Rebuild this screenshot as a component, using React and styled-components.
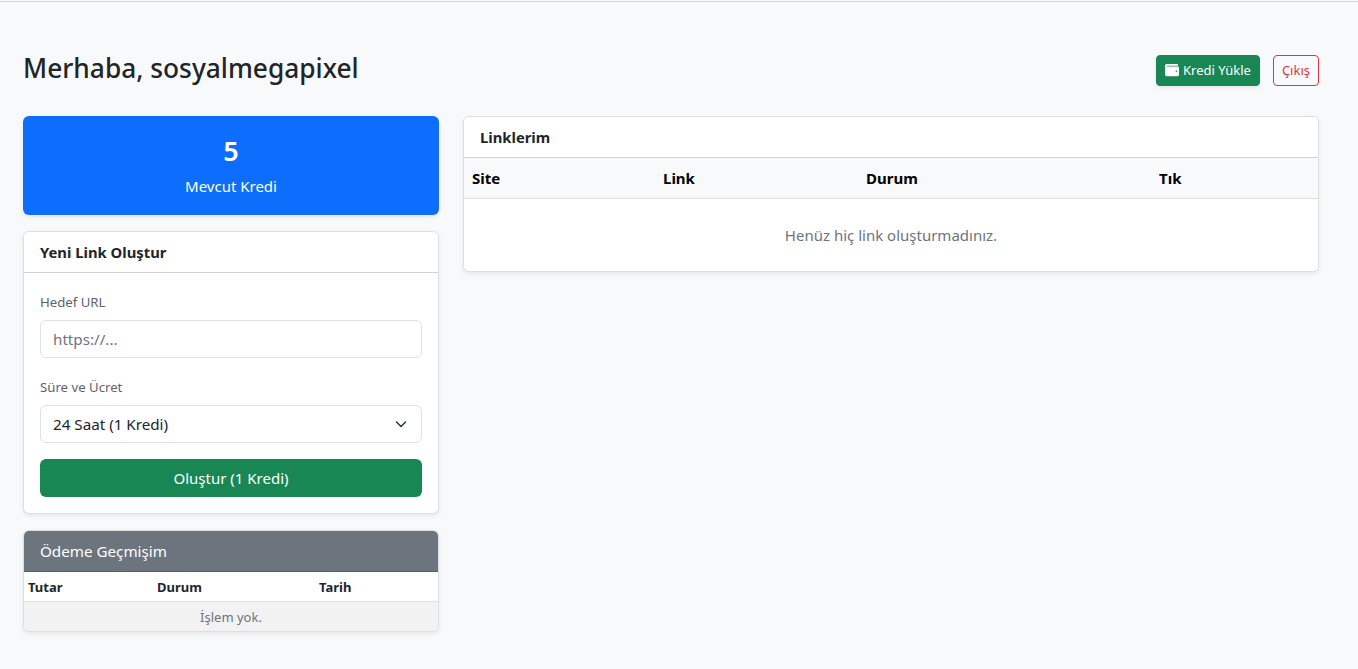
import React from "react";
import styled, { createGlobalStyle } from "styled-components";
import { FaWallet } from "react-icons/fa";

const GlobalStyle = createGlobalStyle`
  html, body {
    margin: 0;
    padding: 0;
    background: #f8f9fa;
  }
  body {
    font-family: "Noto Sans", "Open Sans", sans-serif;
    color: #212529;
  }
  * {
    box-sizing: border-box;
  }
`;

const Page = styled.div`
  height: 669px;
  overflow: hidden;
  border-top: 1px solid #d3d4d6;
  margin-top: 1px;
  padding: 39px 39px 0 23px;
`;

const Header = styled.div`
  display: flex;
  justify-content: space-between;
  align-items: center;
  height: 54px;
  margin-bottom: 21px;
`;

const Title = styled.h1`
  margin: 0;
  font-size: 26.3px;
  font-weight: 500;
  line-height: 54px;
`;

const Actions = styled.div`
  display: flex;
  align-items: center;
  gap: 13px;
  padding-top: 4px;
`;

const SmallButton = styled.button`
  display: flex;
  align-items: center;
  gap: 4px;
  height: 31px;
  padding: 0 8px;
  font-family: inherit;
  font-size: 13px;
  border-radius: 4px;
  border: 1px solid ${props => props.$outline ? "#dc3545" : "#198754"};
  background: ${props => props.$outline ? "transparent" : "#198754"};
  color: ${props => props.$outline ? "#dc3545" : "#fff"};
  box-shadow: ${props => props.$outline ? "none" : "0 2px 4px rgba(0,0,0,.075)"};
`;

const Columns = styled.div`
  display: grid;
  grid-template-columns: 416px 856px;
  gap: 24px;
  align-items: start;
`;

const Sidebar = styled.div`
  display: flex;
  flex-direction: column;
  gap: 16px;
`;

const BalanceCard = styled.div`
  height: 99px;
  border-radius: 6px;
  background: #0d6efd;
  color: #fff;
  text-align: center;
  padding-top: 16px;
  box-shadow: 0 2px 4px rgba(0,0,0,.075);
`;

const BalanceValue = styled.div`
  font-size: 27px;
  font-weight: 600;
  line-height: 38px;
`;

const BalanceLabel = styled.div`
  font-size: 15px;
  line-height: 20px;
  margin-top: 6px;
`;

const Card = styled.section`
  background: #fff;
  border: 1px solid rgba(0,0,0,.125);
  border-radius: 6px;
  overflow: hidden;
  box-shadow: 0 2px 4px rgba(0,0,0,.075);
`;

const CardHeader = styled.div`
  height: 41px;
  padding: 0 16px;
  display: flex;
  align-items: center;
  font-size: ${props => props.$muted ? "15.2px" : "14.8px"};
  font-weight: ${props => props.$muted ? 400 : 700};
  background: ${props => props.$muted ? "#6c757d" : "#fff"};
  color: ${props => props.$muted ? "#fff" : "#212529"};
  border-bottom: 1px solid rgba(0,0,0,.175);
`;

const Form = styled.div`
  padding: 19px 16px 16px;
`;

const Label = styled.label`
  display: block;
  font-size: 13.2px;
  line-height: 20px;
  margin-bottom: 8px;
  color: #5c636a;
`;

const Field = styled.div`
  height: 38px;
  display: flex;
  align-items: center;
  justify-content: space-between;
  padding: 0 12px;
  margin-bottom: 19px;
  border: 1px solid #dee2e6;
  border-radius: 6px;
  font-size: 15.2px;
  color: ${props => props.$placeholder ? "#6c757d" : "#212529"};
`;

const SubmitButton = styled.button`
  width: 100%;
  height: 38px;
  margin-top: -3px;
  display: block;
  border: 0;
  border-radius: 6px;
  background: #198754;
  color: #fff;
  font-family: inherit;
  font-size: 15px;
`;

const Table = styled.table`
  width: 100%;
  border-collapse: collapse;
  table-layout: fixed;
`;

const HeadCell = styled.th`
  text-align: left;
  font-weight: 700;
  color: ${props => props.$small ? "#212529" : "#000"};
  font-size: ${props => props.$small ? "13px" : "15px"};
  height: ${props => props.$small ? "29px" : "40px"};
  padding: ${props => props.$small ? "2px 4px 0" : "0 8px"};
  background: ${props => props.$small ? "#fff" : "#f8f9fa"};
  border-bottom: 1px solid #dee2e6;
`;

const EmptyCell = styled.td`
  text-align: center;
  color: #6c757d;
  font-size: ${props => props.$small ? "13px" : "15px"};
  height: ${props => props.$small ? "30px" : "73px"};
  padding: ${props => props.$small ? "2px 0 0" : "1px 0 0"};
  background: ${props => props.$small ? "#f2f2f2" : "#fff"};
`;

const Chevron = () => (
  <svg width="16" height="16" viewBox="0 0 16 16" fill="none" stroke="#343a40" strokeWidth="1.6" strokeLinecap="round" strokeLinejoin="round">
    <path d="m3.5 6 4.5 4.5L12.5 6" />
  </svg>
);

const App = () => (
  <Page>
    <GlobalStyle />
    <Header>
      <Title>Merhaba, sosyalmegapixel</Title>
      <Actions>
        <SmallButton><FaWallet size={14} /> Kredi Yükle</SmallButton>
        <SmallButton $outline>Çıkış</SmallButton>
      </Actions>
    </Header>
    <Columns>
      <Sidebar>
        <BalanceCard>
          <BalanceValue>5</BalanceValue>
          <BalanceLabel>Mevcut Kredi</BalanceLabel>
        </BalanceCard>
        <Card>
          <CardHeader>Yeni Link Oluştur</CardHeader>
          <Form>
            <Label>Hedef URL</Label>
            <Field $placeholder>https://...</Field>
            <Label>Süre ve Ücret</Label>
            <Field>24 Saat (1 Kredi)<Chevron /></Field>
            <SubmitButton>Oluştur (1 Kredi)</SubmitButton>
          </Form>
        </Card>
        <Card>
          <CardHeader $muted>Ödeme Geçmişim</CardHeader>
          <Table>
            <colgroup>
              <col style={{ width: "129px" }} />
              <col style={{ width: "162px" }} />
              <col />
            </colgroup>
            <thead>
              <tr>
                <HeadCell $small>Tutar</HeadCell>
                <HeadCell $small>Durum</HeadCell>
                <HeadCell $small>Tarih</HeadCell>
              </tr>
            </thead>
            <tbody>
              <tr><EmptyCell $small colSpan="3">İşlem yok.</EmptyCell></tr>
            </tbody>
          </Table>
        </Card>
      </Sidebar>
      <Card>
        <CardHeader>Linklerim</CardHeader>
        <Table>
          <colgroup>
            <col style={{ width: "191px" }} />
            <col style={{ width: "203px" }} />
            <col style={{ width: "293px" }} />
            <col />
          </colgroup>
          <thead>
            <tr>
              <HeadCell>Site</HeadCell>
              <HeadCell>Link</HeadCell>
              <HeadCell>Durum</HeadCell>
              <HeadCell>Tık</HeadCell>
            </tr>
          </thead>
          <tbody>
            <tr><EmptyCell colSpan="4">Henüz hiç link oluşturmadınız.</EmptyCell></tr>
          </tbody>
        </Table>
      </Card>
    </Columns>
  </Page>
);

export default App;
